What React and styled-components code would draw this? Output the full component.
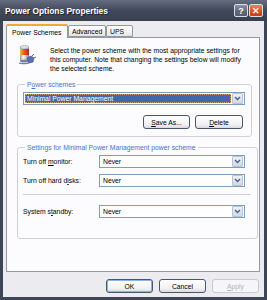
import React from 'react'
import styled, { createGlobalStyle } from 'styled-components'

const Global = createGlobalStyle`
  body{
    margin: 0;
    background: #fff;
  }
  *{ box-sizing: border-box; }
`

const Window = styled.div`
  width: 267px;
  height: 300px;
  display: flex;
  flex-direction: column;
  background: #3d4556;
  font-family: "Liberation Sans", Arial, sans-serif;
  font-size: 6.8px;
  color: #000;
`

const TitleBar = styled.div`
  height: 21px;
  display: flex;
  align-items: center;
  padding: 0 4px 0 5px;
  background: linear-gradient(#646d80, #434b5c 45%, #383f4e);
  color: #fff;
  font-size: 8.4px;
  font-weight: bold;
  text-shadow: 1px 1px 0 #1f2431;
  h1{
    flex: 1;
    margin: 0;
    font-size: inherit;
  }
`

const CapBtn = styled.div`
  width: 14px;
  height: 13px;
  margin-left: 1px;
  border: 1px solid #d9dde6;
  border-radius: 2px;
  display: flex;
  align-items: center;
  justify-content: center;
  background: ${p => p.close
    ? 'linear-gradient(#f0815e, #dd4a22 60%, #c83d1a)'
    : 'linear-gradient(#8c94a3, #5f6777 60%, #555d6c)'};
  color: #fff;
  font-size: 9px;
  text-shadow: none;
`

const Client = styled.div`
  flex: 1;
  margin: 0 3px 3px;
  padding: 3px 4px 0 3px;
  background: #ecebef;
  display: flex;
  flex-direction: column;
`

const Tabs = styled.div`
  height: 13px;
  display: flex;
  align-items: flex-end;
  position: relative;
  z-index: 1;
`

const Tab = styled.div`
  width: ${p => p.w}px;
  height: ${p => p.active ? 14 : 12}px;
  margin-bottom: ${p => p.active ? -1 : 0}px;
  border: 1px solid #919b9c;
  border-bottom: ${p => p.active ? 'none' : '1px solid #919b9c'};
  border-top: ${p => p.active ? '2px solid #f3a63b' : '1px solid #919b9c'};
  border-radius: 2px 2px 0 0;
  background: ${p => p.active ? '#fcfcfe' : 'linear-gradient(#ffffff, #eeedf0 70%, #e2e1e6)'};
  display: flex;
  align-items: center;
  padding-left: ${p => p.active ? 5 : 3}px;
  white-space: nowrap;
`

const Panel = styled.div`
  height: 235px;
  border: 1px solid #919b9c;
  background: #fcfcfe;
  padding: 7px 7px 0 9px;
  display: flex;
  flex-direction: column;
`

const Intro = styled.div`
  display: flex;
  gap: 13px;
  p{
    margin: 0;
    line-height: 9px;
    padding-top: 1px;
  }
`

const Group = styled.fieldset`
  margin: ${p => p.top}px 0 0 1px;
  width: 235px;
  border: 1px solid #cfd1da;
  border-radius: 3px;
  padding: ${p => p.pad};
  display: flex;
  flex-direction: column;
  legend{
    color: #4a72c6;
    padding: 0 2px;
    margin-left: 2px;
    line-height: 9px;
  }
`

const Combo = styled.div`
  height: 13px;
  width: ${p => p.w}px;
  border: 1px solid #7f9db9;
  background: #fff;
  display: flex;
  align-items: center;
  padding: 1px;
  span{
    flex: 1;
    height: 100%;
    display: flex;
    align-items: center;
    padding-left: 2px;
    background: ${p => p.selected ? '#4466b0' : 'transparent'};
    color: ${p => p.selected ? '#fff' : '#000'};
    outline: ${p => p.selected ? '1px dotted #c9a66a' : 'none'};
    outline-offset: -1px;
  }
`

const Arrow = styled.div`
  width: 11px;
  height: 11px;
  margin-left: 1px;
  border-radius: 1px;
  border: 1px solid #b8c3d6;
  background: linear-gradient(#eef1f7, #d0d8e6);
  display: flex;
  align-items: center;
  justify-content: center;
`

const ButtonRow = styled.div`
  display: flex;
  justify-content: flex-end;
  gap: ${p => p.gap}px;
  margin-top: ${p => p.top}px;
  padding-right: ${p => p.right}px;
`

const Button = styled.div`
  width: ${p => p.w || 47}px;
  height: 14px;
  border: 1px solid ${p => p.disabled ? '#c9c9d3' : '#4a566e'};
  border-radius: 3px;
  background: ${p => p.disabled ? '#f6f6f8' : 'linear-gradient(#ffffff, #f1f1f4 70%, #d9d9e1)'};
  box-shadow: ${p => p.primary ? 'inset 0 0 0 1px #8fb0e8' : 'none'};
  color: ${p => p.disabled ? '#b4b4bc' : '#000'};
  display: flex;
  align-items: center;
  justify-content: center;
`

const Row = styled.div`
  display: flex;
  align-items: center;
  margin-top: ${p => p.top}px;
  label{
    width: 76px;
  }
`

const Separator = styled.div`
  height: 1px;
  margin: 7px 0 0 0;
  width: 228px;
  background: #cfd1da;
`

const U = styled.u`
  text-decoration: underline;
`

function PowerIcon() {
  return (
    <svg width="21" height="20" viewBox="0 0 21 20">
      <defs>
        <linearGradient id="body" x1="0" x2="1">
          <stop offset="0" stopColor="#9aa0ab" />
          <stop offset="0.4" stopColor="#f4f5f7" />
          <stop offset="1" stopColor="#7d838f" />
        </linearGradient>
        <linearGradient id="band" x1="0" x2="1">
          <stop offset="0" stopColor="#f2c23a" />
          <stop offset="0.45" stopColor="#ea5a2c" />
          <stop offset="1" stopColor="#b3261a" />
        </linearGradient>
      </defs>
      <rect x="4" y="2" width="9" height="14" fill="url(#body)" />
      <ellipse cx="8.5" cy="16" rx="4.5" ry="1.5" fill="#7d838f" />
      <rect x="4" y="4" width="9" height="6" fill="url(#band)" />
      <ellipse cx="8.5" cy="2" rx="4.5" ry="1.5" fill="#dfe2e7" stroke="#8a909b" strokeWidth="0.5" />
      <path d="M11 13 L15 11 L18 13 L17 17 L13 18 Z" fill="#5b6fb6" stroke="#34418a" strokeWidth="0.6" />
      <path d="M16 11 L18 9 M18 13 L20 12" stroke="#6b7079" strokeWidth="1" />
      <path d="M13 18 C10 19 6 19 3 18" stroke="#4a5ea8" strokeWidth="1" fill="none" />
    </svg>
  )
}

function Chevron() {
  return (
    <svg width="7" height="5" viewBox="0 0 7 5">
      <path d="M1 1 L3.5 3.5 L6 1" stroke="#4d6185" strokeWidth="1.4" fill="none" />
    </svg>
  )
}

function Dropdown({value, w, selected}) {
  return (
    <Combo w={w} selected={selected}>
      <span>{value}</span>
      <Arrow><Chevron /></Arrow>
    </Combo>
  )
}

export default function App() {
  return (
    <Window>
      <Global />
      <TitleBar>
        <h1>Power Options Properties</h1>
        <CapBtn>?</CapBtn>
        <CapBtn close>✕</CapBtn>
      </TitleBar>
      <Client>
        <Tabs>
          <Tab active w={62}>Power Schemes</Tab>
          <Tab w={38}>Advanced</Tab>
          <Tab w={27}>UPS</Tab>
        </Tabs>
        <Panel>
          <Intro>
            <PowerIcon />
            <p>
              Select the power scheme with the most appropriate settings for<br />
              this computer. Note that changing the settings below will modify<br />
              the selected scheme.
            </p>
          </Intro>
          <Group top={7} pad="3px 6px 7px 5px">
            <legend>P<U>o</U>wer schemes</legend>
            <Dropdown w={222} selected value="Minimal Power Management" />
            <ButtonRow gap={5} top={10} right={2}>
              <Button><U>S</U>ave As...</Button>
              <Button w={48}><U>D</U>elete</Button>
            </ButtonRow>
          </Group>
          <Group top={6} pad="0 6px 20px 5px">
            <legend>Settings for Minimal Power Management power scheme</legend>
            <Row top={3}>
              <label>Turn off <U>m</U>onitor:</label>
              <Dropdown w={146} value="Never" />
            </Row>
            <Row top={6}>
              <label>Turn off hard d<U>i</U>sks:</label>
              <Dropdown w={146} value="Never" />
            </Row>
            <Separator />
            <Row top={10}>
              <label>System s<U>t</U>andby:</label>
              <Dropdown w={146} value="Never" />
            </Row>
          </Group>
        </Panel>
        <ButtonRow gap={6} top={7} right={1}>
          <Button primary>OK</Button>
          <Button>Cancel</Button>
          <Button disabled><U>A</U>pply</Button>
        </ButtonRow>
      </Client>
    </Window>
  )
}
